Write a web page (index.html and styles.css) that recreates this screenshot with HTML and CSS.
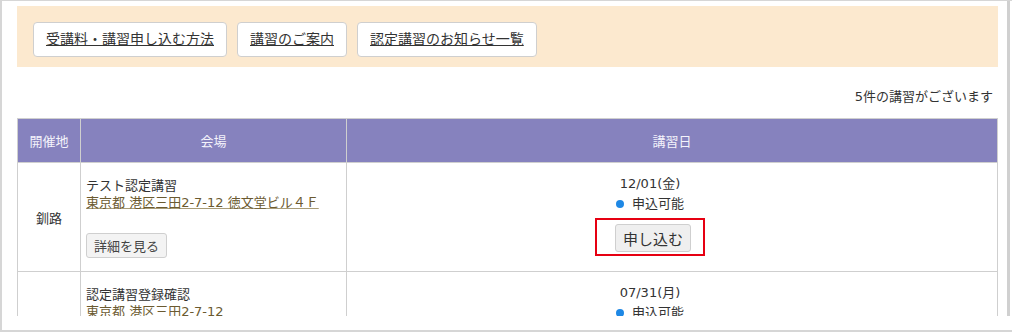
FILE: index.html
```html
<!DOCTYPE html>
<html lang="ja">
<head>
    <meta charset="UTF-8">
    <meta name="viewport" content="width=device-width, initial-scale=1.0">
    <title>講習一覧</title>
    <link rel="stylesheet" href="styles.css">
</head>
<body>
    <div class="window">
        <main class="page">
            <nav class="guide">
                <a href="#" class="guide-btn">受講料・講習申し込む方法</a>
                <a href="#" class="guide-btn">講習のご案内</a>
                <a href="#" class="guide-btn">認定講習のお知らせ一覧</a>
            </nav>

            <p class="count">5件の講習がございます</p>

            <table class="courses">
                <colgroup>
                    <col class="col-area">
                    <col class="col-venue">
                    <col>
                </colgroup>
                <thead>
                    <tr>
                        <th>開催地</th>
                        <th>会場</th>
                        <th>講習日</th>
                    </tr>
                </thead>
                <tbody>
                    <tr>
                        <td class="area">釧路</td>
                        <td class="venue">
                            <div>テスト認定講習</div>
                            <a href="#" class="venue-link">東京都 港区三田2-7-12 徳文堂ビル４Ｆ</a>
                            <button class="detail-btn">詳細を見る</button>
                        </td>
                        <td class="date">
                            <div>12/01(金)</div>
                            <div class="status"><span class="dot"></span>申込可能</div>
                            <div class="apply-box"><button class="apply-btn">申し込む</button></div>
                        </td>
                    </tr>
                    <tr>
                        <td class="area"></td>
                        <td class="venue">
                            <div>認定講習登録確認</div>
                            <a href="#" class="venue-link">東京都 港区三田2-7-12</a>
                        </td>
                        <td class="date">
                            <div>07/31(月)</div>
                            <div class="status"><span class="dot"></span>申込可能</div>
                        </td>
                    </tr>
                </tbody>
            </table>
        </main>
    </div>
</body>
</html>
```

FILE: styles.css
```css
html{
    box-sizing: border-box;
    font-family: "DejaVu Sans", "Noto Sans CJK JP", sans-serif;
    font-size: 13px;
    color: #333;
}

*,
*::after,
*::before{
    box-sizing: border-box;
}

body{
    margin: 0;
    background-color: #fff;
}

.window{
    width: 1012px;
    height: 332px;
    padding-right: 2px;
    border-left: 2px solid #d6d6d6;
    border-top: 1px solid #d6d6d6;
    border-bottom: 2px solid #d6d6d6;
}

.page{
    height: 315px;
    overflow: hidden;
    padding: 5px 9px 0 15px;
    border-right: 3px solid #d0d0d0;
}

/* guide buttons */
.guide{
    display: flex;
    gap: 10px;
    padding: 16px 16px 10px;
    background-color: #fce9cf;
}
.guide-btn{
    display: block;
    height: 35px;
    padding: 0 12px;
    line-height: 33px;
    font-size: 14px;
    color: #333;
    background-color: #fff;
    border: 1px solid #cfcfcf;
    border-radius: 4px;
}

.count{
    margin: 20px 5px 11px 0;
    line-height: 20px;
    text-align: right;
}

/* table */
.courses{
    width: 100%;
    border-collapse: collapse;
    table-layout: fixed;
}
.col-area{
    width: 63px;
}
.col-venue{
    width: 266px;
}
.courses th,
.courses td{
    border: 1px solid #cfcfcf;
}
.courses th{
    height: 44px;
    font-weight: normal;
    color: #f4f3fb;
    background-color: #8682be;
}

.area{
    text-align: center;
    vertical-align: middle;
}

.venue{
    padding: 14px 5px 13px;
    line-height: 17px;
    vertical-align: top;
}
.venue-link{
    display: block;
    color: #6b5a30;
    text-decoration-color: #a89c78;
}
.detail-btn{
    display: block;
    height: 25px;
    margin-top: 22px;
    padding: 0 7px;
    font-family: inherit;
    font-size: 13px;
    color: #444;
    background-color: #f3f3f3;
    border: 1px solid #cfcfcf;
    border-radius: 3px;
}

.date{
    padding: 11px 44px 0 0;
    line-height: 20px;
    text-align: center;
    vertical-align: top;
}
.status{
    display: flex;
    justify-content: center;
    align-items: center;
    gap: 8px;
}
.dot{
    width: 8px;
    height: 8px;
    border-radius: 50%;
    background-color: #1e88e5;
}
.apply-box{
    display: inline-block;
    margin-top: 4px;
    padding: 4px 12px 2px 18px;
    border: 2px solid #e60012;
}
.apply-btn{
    height: 28px;
    padding: 0 7px;
    font-family: inherit;
    font-size: 15px;
    color: #333;
    background-color: #efefef;
    border: 1px solid #cfcfcf;
    border-radius: 3px;
}
```
